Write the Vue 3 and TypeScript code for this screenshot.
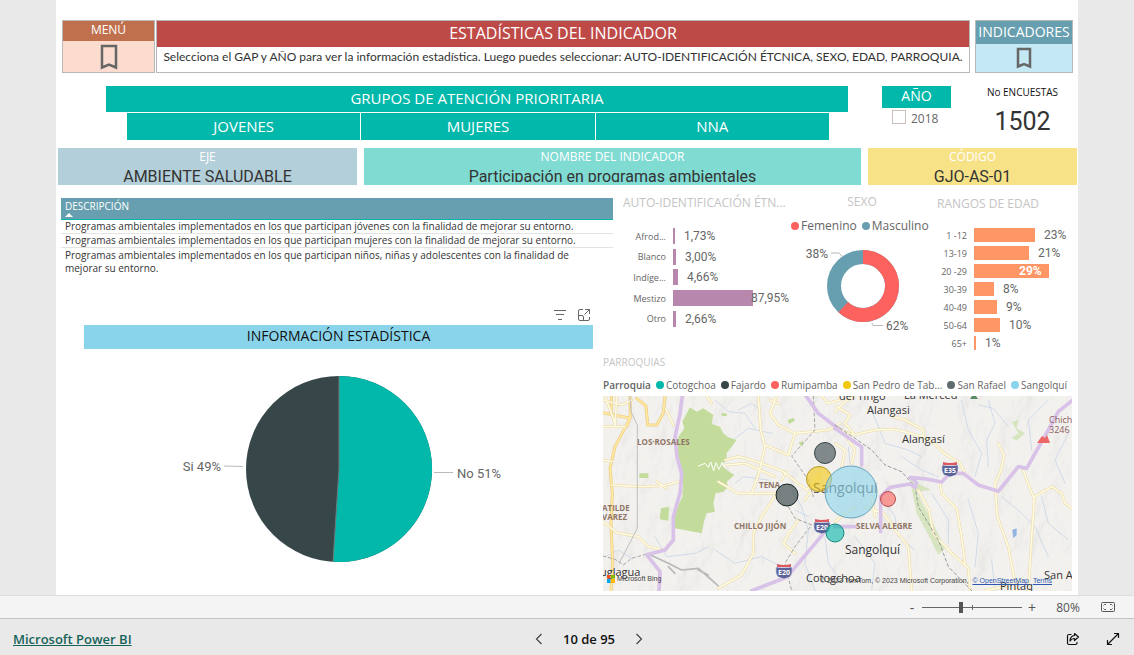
<script setup lang="ts">
import { ref } from 'vue'

interface Bar {
  label: string
  value: string
  size: number
  placement?: 'over' | 'inside'
}

interface Parish {
  name: string
  color: string
}

const groups: string[] = ['JOVENES', 'MUJERES', 'NNA']

const descriptions: string[] = [
  'Programas ambientales implementados en los que participan jóvenes con la finalidad de mejorar su entorno.',
  'Programas ambientales implementados en los que participan mujeres con la finalidad de mejorar su entorno.',
  'Programas ambientales implementados en los que participan niños, niñas y adolescentes con la finalidad de mejorar su entorno.',
]

const ethnicity: Bar[] = [
  { label: 'Afrod...', value: '1,73%', size: 2 },
  { label: 'Blanco', value: '3,00%', size: 3 },
  { label: 'Indíge...', value: '4,66%', size: 5 },
  { label: 'Mestizo', value: '87,95%', size: 80, placement: 'over' },
  { label: 'Otro', value: '2,66%', size: 3 },
]

const ages: Bar[] = [
  { label: '1 -12', value: '23%', size: 61 },
  { label: '13-19', value: '21%', size: 55 },
  { label: '20 -29', value: '29%', size: 75, placement: 'inside' },
  { label: '30-39', value: '8%', size: 20 },
  { label: '40-49', value: '9%', size: 23 },
  { label: '50-64', value: '10%', size: 26 },
  { label: '65+', value: '1%', size: 2 },
]

const parishes: Parish[] = [
  { name: 'Cotogchoa', color: '#01b8aa' },
  { name: 'Fajardo', color: '#374649' },
  { name: 'Rumipamba', color: '#fd625e' },
  { name: 'San Pedro de Tab...', color: '#f2c80f' },
  { name: 'San Rafael', color: '#5f6b6d' },
  { name: 'Sangolquí', color: '#8ad4eb' },
]

const year2018 = ref(false)
const zoom = ref(39)
</script>

<template>
  <div class="viewer">
    <main class="stage">
      <div class="page">
        <header class="top">
          <section class="nav-card menu">
            <h2>MENÚ</h2>
            <button type="button" aria-label="Menú">
              <svg width="18" height="26" viewBox="0 0 18 26"><path d="M2 2H16V23.500L9 20.500L2 23.500Z" fill="none" stroke="#666" stroke-width="2.500" /></svg>
            </button>
          </section>
          <section class="title-card">
            <h1>ESTADÍSTICAS DEL INDICADOR</h1>
            <p>Selecciona el GAP y AÑO para ver la información estadística. Luego puedes seleccionar: AUTO-IDENTIFICACIÓN ÉTCNICA, SEXO, EDAD, PARROQUIA.</p>
          </section>
          <section class="nav-card indicators">
            <h2>INDICADORES</h2>
            <button type="button" aria-label="Indicadores">
              <svg width="16" height="22" viewBox="0 0 16 22"><path d="M2 2H14V19.500L8 17L2 19.500Z" fill="none" stroke="#666" stroke-width="2.500" /></svg>
            </button>
          </section>
        </header>

        <div class="filters">
          <section class="groups">
            <h2>GRUPOS DE ATENCIÓN PRIORITARIA</h2>
            <div class="group-buttons">
              <button v-for="g in groups" :key="g" type="button">{{ g }}</button>
            </div>
          </section>
          <section class="year">
            <h2>AÑO</h2>
            <label><input v-model="year2018" type="checkbox" /><span>2018</span></label>
          </section>
          <section class="surveys">
            <h2>No ENCUESTAS</h2>
            <strong>1502</strong>
          </section>
        </div>

        <div class="facts">
          <section class="fact axis"><h3>EJE</h3><p>AMBIENTE SALUDABLE</p></section>
          <section class="fact name"><h3>NOMBRE DEL INDICADOR</h3><p>Participación en programas ambientales</p></section>
          <section class="fact code"><h3>CÓDIGO</h3><p>GJO-AS-01</p></section>
        </div>

        <div class="body">
          <div class="left">
            <table>
              <thead>
                <tr><th scope="col"><span>DESCRIPCIÓN</span><i class="sort"></i></th></tr>
              </thead>
              <tbody>
                <tr v-for="d in descriptions" :key="d"><td>{{ d }}</td></tr>
              </tbody>
            </table>
            <section class="info">
              <div class="tools">
                <button type="button" aria-label="Filtros">
                  <svg width="14" height="14" viewBox="0 0 14 14"><path d="M1 2.500H13M3 6.500H11M5 11.500H9" fill="none" stroke="#666" /></svg>
                </button>
                <button type="button" aria-label="Modo de enfoque">
                  <svg width="14" height="14" viewBox="0 0 14 14"><path d="M6 1.500H3Q1.500 1.500 1.500 3V11Q1.500 12.500 3 12.500H11Q12.500 12.500 12.500 11V9M8 1.500H12.500V6M12.500 1.500L7.500 6.500M1.500 7.500H5Q6.500 7.500 6.500 9V12.500" fill="none" stroke="#666" /></svg>
                </button>
              </div>
              <h2>INFORMACIÓN ESTADÍSTICA</h2>
              <svg class="pie" viewBox="0 0 509 200" role="img" aria-label="No 51%, Si 49%">
                <circle cx="255" cy="107" r="93" fill="#374649" />
                <path d="M255 14A93 93 0 1 1 249 199.800L255 107Z" fill="#01b8aa" />
                <path d="M255 14V107L249 199.800" fill="none" stroke="#6c7c7c" />
                <path d="M140 104L159 104.500M350 110.500H369" fill="none" stroke="#b9b9b9" />
                <text x="137" y="109" text-anchor="end">Si 49%</text>
                <text x="373" y="116">No 51%</text>
              </svg>
            </section>
          </div>

          <div class="right">
            <div class="charts">
              <section class="chart ethnicity">
                <h3>AUTO-IDENTIFICACIÓN ÉTN...</h3>
                <ul>
                  <li v-for="b in ethnicity" :key="b.label">
                    <span class="cat">{{ b.label }}</span>
                    <span class="bar" :style="{ width: b.size + 'px' }"></span>
                    <span class="val" :class="b.placement">{{ b.value }}</span>
                  </li>
                </ul>
              </section>
              <section class="chart sex">
                <h3>SEXO</h3>
                <div class="legend">
                  <span><i class="dot female"></i>Femenino</span>
                  <span><i class="dot male"></i>Masculino</span>
                </div>
                <svg viewBox="0 0 142 100" width="142" height="100" role="img" aria-label="Femenino 62%, Masculino 38%">
                  <circle cx="72" cy="50" r="29" fill="none" stroke="#689fb0" stroke-width="14" />
                  <path d="M72 21A29 29 0 1 1 52.200 71.200" fill="none" stroke="#fd625e" stroke-width="14" />
                  <path d="M40 17H48L51 20M81 87L82 89.500H92" fill="none" stroke="#b9b9b9" />
                  <text x="37" y="22" text-anchor="end">38%</text>
                  <text x="95" y="94">62%</text>
                </svg>
              </section>
              <section class="chart ages">
                <h3>RANGOS DE EDAD</h3>
                <ul>
                  <li v-for="b in ages" :key="b.label">
                    <span class="cat">{{ b.label }}</span>
                    <span class="bar" :style="{ width: b.size + 'px' }"></span>
                    <span class="val" :class="b.placement">{{ b.value }}</span>
                  </li>
                </ul>
              </section>
            </div>

            <section class="parishes">
              <h3>PARROQUIAS</h3>
              <div class="legend">
                <b>Parroquia</b>
                <span v-for="p in parishes" :key="p.name"><i class="dot" :style="{ background: p.color }"></i>{{ p.name }}</span>
              </div>
              <div class="map">
                <svg viewBox="0 0 469 195" preserveAspectRatio="xMidYMid slice" role="img" aria-label="Mapa de Sangolquí">
                  <defs>
                    <filter id="relief" x="0" y="0" width="100%" height="100%">
                      <feTurbulence type="fractalNoise" baseFrequency="0.035 0.022" numOctaves="4" seed="8" />
                      <feDiffuseLighting lighting-color="#fff" surfaceScale="6" diffuseConstant="1.150"><feDistantLight azimuth="215" elevation="60" /></feDiffuseLighting>
                    </filter>
                    <g id="shield">
                      <path d="M-8-4Q0-3 8-4Q9 3 6 6L0 8L-6 6Q-9 3-8-4Z" fill="#5b6399" stroke="#fff" stroke-width="0.500" />
                      <path d="M-7-7Q0-5 7-7V-4H-7Z" fill="#dd5860" />
                    </g>
                  </defs>
                  <rect width="469" height="195" fill="#f1efec" />
                  <rect width="469" height="195" filter="url(#relief)" opacity="0.150" />
                  <g transform="scale(0.33333)" fill="none" stroke-linecap="round" stroke-linejoin="round">
                    <g transform="translate(-24 -138)">
                      <path d="M285 172L275 190L262 215L268 235L250 260L247 320L258 350L264 400L262 440L240 488V535L320 550L327 515L335 490L360 485L355 460L362 430L385 425L400 410L395 395L418 375L395 360L380 345L395 330L395 310L425 270L400 262L385 250L375 230L350 222L355 195L325 175L305 185ZM198 475L222 470L220 512L194 508ZM578 210L595 203L600 212L582 222ZM133 370H160V384H133ZM380 190H395V198H380ZM610 278L625 272L622 290Z" fill="#c3dc9c" />
                      <g stroke="#cfdbe9" stroke-width="3">
                        <path d="M360 150L400 185L450 190L480 235M420 265L460 235L530 250M430 180L470 160L490 175M590 420L620 470L640 540L630 640L660 722M180 560L215 620L300 610L340 590M690 560L700 640L735 690M360 600L420 640L500 620L560 650M30 620L70 600L110 625M600 480L640 500M420 400L445 380L520 390" />
                      </g>
                      <path d="M160 612L220 640L260 660L310 655L350 690L370 708M220 650L240 670M310 660L340 675" stroke="#b9b9b9" stroke-width="5" />
                      <g stroke="#eccb7f" stroke-width="9">
                        <path d="M24 188L105 205L60 290L45 355L52 430L48 520L53 640L48 722M125 145L153 168L158 225L185 225L205 190L210 138M105 138L106 200L95 230M50 138L48 190" />
                      </g>
                      <g stroke="#ffe9a3" stroke-width="5">
                        <path d="M24 188L105 205L60 290L45 355L52 430L48 520L53 640L48 722M125 145L153 168L158 225L185 225L205 190L210 138M105 138L106 200L95 230M50 138L48 190" />
                      </g>
                      <g stroke="#e8d7a4" stroke-width="8">
                        <path d="M24 150L80 165L110 150M24 230H90M30 138L60 220M65 138L60 230M24 330L50 335M50 405L130 410L190 408L215 405L250 395M185 395L215 415M24 515L65 548L130 560L160 590L205 600M212 175L235 225M335 138L350 160M490 138L497 240L510 290L490 375L470 430L545 430M390 330L430 320L470 330L560 362L635 420L675 370M390 345L450 340L540 380M545 138L525 190L550 225L600 250L580 315L510 285M600 250L700 240L735 220M545 430L500 500L475 550L475 610L440 675L370 715M370 395L430 430L470 430M565 580L600 610M565 580L585 545L610 510M680 138L700 160L735 150M550 160L525 150M630 450L675 380M560 390L575 365" />
                      </g>
                      <g stroke="#fffbe1" stroke-width="5">
                        <path d="M24 150L80 165L110 150M24 230H90M30 138L60 220M65 138L60 230M24 330L50 335M50 405L130 410L190 408L215 405L250 395M185 395L215 415M24 515L65 548L130 560L160 590L205 600M212 175L235 225M335 138L350 160M490 138L497 240L510 290L490 375L470 430L545 430M390 330L430 320L470 330L560 362L635 420L675 370M390 345L450 340L540 380M545 138L525 190L550 225L600 250L580 315L510 285M600 250L700 240L735 220M545 430L500 500L475 550L475 610L440 675L370 715M370 395L430 430L470 430M565 580L600 610M565 580L585 545L610 510M680 138L700 160L735 150M550 160L525 150M630 450L675 380M560 390L575 365" />
                      </g>
                      <path d="M310 348L330 340L340 352L347 336L356 362L363 338L372 358L382 336L390 352" stroke="#fff" stroke-width="3" />
                      <path d="M105 138L108 185L127 225V535L75 635" stroke="#c0c0c0" stroke-width="3" />
                      <path d="M24 618L60 628L85 645L110 625L155 612M655 138L660 240L590 318L640 390L655 440M580 470L600 505L650 525L600 590L570 640L590 722" stroke="#a5a5a5" stroke-width="3" stroke-dasharray="9 8" />
                      <path d="M262 138L255 190L240 262L246 320L260 370L256 425L235 500V570L210 600L155 614L195 665L192 722M633 138L670 190L735 240M470 722L575 682L690 545" stroke="#d8c2e8" stroke-width="11" />
                    </g>
                    <g transform="translate(696 -138)">
                      <path d="M530 215L550 210L545 235L570 250L545 272L530 264L550 250ZM225 390L290 420L245 425L262 460L285 500L330 595L310 615L280 555L245 490Z" fill="#cbdfad" opacity="0.700" />
                      <path d="M532 540L545 535V555L535 565Z" fill="#91b4e2" />
                      <g stroke="#cfdbe9" stroke-width="3">
                        <path d="M110 180L150 280L220 300L260 320M380 150L400 240L440 310L420 380M460 150L480 220L455 270L460 350M640 150L580 210L590 300M140 440L180 500L190 560L240 600M290 430L340 510L340 580M400 450L430 550L420 650M500 440L560 490L600 530L640 620M700 250L660 330L690 400M620 440L640 520L700 570M470 630L480 720M60 560L120 640L110 720M40 290L45 340M200 320L260 360L310 380M430 165L475 175L520 230" />
                      </g>
                      <g stroke="#e8d7a4" stroke-width="8">
                        <path d="M0 185L30 155L60 138M0 235L55 255L120 240L180 238L265 260L300 282L330 312L375 338L390 370M55 250L30 220L45 195L5 170M175 200L210 210L265 240V260M490 280L507 315L497 365L480 400L487 500L520 590L545 722M565 362L598 450L590 560L580 722M598 440L650 410L680 430L690 460L711 475M250 420L282 480L295 550L350 610L400 655L405 722M315 400L320 430L365 475L380 560L390 640M90 470L145 490L180 540L220 590L230 722M0 280L30 300L20 350M40 270L60 300L50 340M450 722L510 710L560 690M0 515L60 470M110 440L120 500" />
                      </g>
                      <g stroke="#fffbe1" stroke-width="5">
                        <path d="M0 185L30 155L60 138M0 235L55 255L120 240L180 238L265 260L300 282L330 312L375 338L390 370M55 250L30 220L45 195L5 170M175 200L210 210L265 240V260M490 280L507 315L497 365L480 400L487 500L520 590L545 722M565 362L598 450L590 560L580 722M598 440L650 410L680 430L690 460L711 475M250 420L282 480L295 550L350 610L400 655L405 722M315 400L320 430L365 475L380 560L390 640M90 470L145 490L180 540L220 590L230 722M0 280L30 300L20 350M40 270L60 300L50 340M450 722L510 710L560 690M0 515L60 470M110 440L120 500" />
                      </g>
                      <path d="M0 225L60 265L110 300L150 345L200 365L240 410L250 470L310 570L340 650L410 722" stroke="#999" stroke-width="3" stroke-dasharray="9 8" />
                      <path d="M0 235L50 270L80 290V345M137 545V440L165 412L225 402L240 412L245 398L225 382L275 387L320 396L345 370H385L430 405L490 424L550 350L575 355L640 240L670 185L711 152M0 530H60" stroke="#d8c2e8" stroke-width="11" />
                    </g>
                  </g>
                  <use href="#shield" x="347" y="73" />
                  <use href="#shield" x="219" y="130" />
                  <use href="#shield" x="181" y="175" />
                  <g class="shield-text"><text x="347" y="77">E35</text><text x="219" y="134">E20</text><text x="181" y="179">E20</text></g>
                  <path d="M434 47L439 40L442 42L444 39L447 47Z" fill="#ee6767" />
                  <path d="M367 3L371 -3L375 3Z" fill="#5c8a64" />
                  <g class="district">
                    <text x="34" y="49">LOS·ROSALES</text>
                    <text x="156" y="92">TENA</text>
                    <text x="-1" y="115">ATILDE</text><text x="-1" y="124">VAREZ</text>
                    <text x="131" y="133">CHILLO JIJÓN</text>
                    <text x="253" y="133">SELVA ALEGRE</text>
                  </g>
                  <g class="town">
                    <text x="236" y="4">del Tingo</text><text x="301" y="3">La Merced</text>
                    <text x="264" y="18">Alangasi</text><text x="299" y="47">Alangasí</text>
                    <text x="-3" y="180">uglagua</text><text x="203" y="186">Cotogchoa</text>
                    <text x="397" y="194">Pintaq</text><text x="441" y="183">San A</text>
                  </g>
                  <text class="city" x="210" y="97">Sangolqui</text>
                  <text class="city small" x="242" y="158">Sangolquí</text>
                  <g class="peak"><text x="446" y="27">Chich</text><text x="446" y="37">3246</text></g>
                  <g fill-opacity="0.600">
                    <circle cx="222" cy="57" r="10.500" fill="#374649" stroke="#374649" />
                    <circle cx="184" cy="99" r="11" fill="#273639" stroke="#182426" />
                    <circle cx="216" cy="83" r="12.500" fill="#f2c80f" stroke="#b99d24" />
                    <circle cx="248" cy="96" r="26" fill="#8ad4eb" stroke="#69a5bb" />
                    <circle cx="285" cy="103" r="7.500" fill="#fd625e" stroke="#b94e4e" />
                    <circle cx="232" cy="137" r="9" fill="#01b8aa" stroke="#18887f" />
                  </g>
                </svg>
                <div class="brand"><svg width="8" height="8" viewBox="0 0 8 8"><path d="M0 0H3.500V3.500H0Z" fill="#f25022" /><path d="M4 0H8V3.500H4Z" fill="#7fba00" /><path d="M0 4H3.500V8H0Z" fill="#00a4ef" /><path d="M4 4H8V8H4Z" fill="#ffb900" /></svg>Microsoft Bing</div>
                <div class="credits">© 2023 TomTom, © 2023 Microsoft Corporation, <a href="#osm">© OpenStreetMap</a> <a href="#terms">Terms</a></div>
              </div>
            </section>
          </div>
        </div>
      </div>
    </main>

    <div class="zoombar">
      <button type="button" aria-label="Alejar">-</button>
      <input v-model="zoom" type="range" min="0" max="100" aria-label="Zoom" />
      <button type="button" aria-label="Acercar">+</button>
      <span class="percent">80%</span>
      <button type="button" class="fit" aria-label="Ajustar a la página">
        <svg width="14" height="10" viewBox="0 0 14 10"><rect x="0.500" y="0.500" width="13" height="9" rx="1" fill="none" stroke="#555" /><path d="M5 2.500H3.500L2.500 3.500M2.500 6.500L3.500 7.500H5M9 2.500H10.500L11.500 3.500M11.500 6.500L10.500 7.500H9" fill="none" stroke="#555" /></svg>
      </button>
    </div>

    <footer>
      <a href="#powerbi">Microsoft Power BI</a>
      <nav aria-label="Páginas">
        <button type="button" aria-label="Página anterior"><svg width="8" height="12" viewBox="0 0 8 12"><path d="M6.500 1L1.500 6L6.500 11" fill="none" stroke="#444" stroke-width="1.200" /></svg></button>
        <span>10 de 95</span>
        <button type="button" aria-label="Página siguiente"><svg width="8" height="12" viewBox="0 0 8 12"><path d="M1.500 1L6.500 6L1.500 11" fill="none" stroke="#444" stroke-width="1.200" /></svg></button>
      </nav>
      <div class="actions">
        <button type="button" aria-label="Compartir">
          <svg width="14" height="14" viewBox="0 0 14 14"><path d="M5.500 2.500H3Q1.500 2.500 1.500 4V11Q1.500 12.500 3 12.500H9.500Q11 12.500 11 11V10M8.500 1.500L12.500 5L8.500 8.500V6.500Q6 6.300 4 9Q4.200 4 8.500 3.500Z" fill="none" stroke="#111" stroke-width="1.200" stroke-linejoin="round" /></svg>
        </button>
        <button type="button" aria-label="Pantalla completa">
          <svg width="14" height="14" viewBox="0 0 14 14"><path d="M1.500 12.500L12.500 1.500M8 1.500H12.500V6M1.500 8V12.500H6" fill="none" stroke="#111" stroke-width="1.200" /></svg>
        </button>
      </div>
    </footer>
  </div>
</template>

<style>
body {
  background: #e9e9e9;
}
</style>

<style scoped>
* {
  box-sizing: border-box;
}
.viewer {
  display: flex;
  flex-direction: column;
  min-height: 100vh;
  font-family: "Open Sans", "Noto Sans", sans-serif;
  color: #333;
}
h1, h2, h3, p, ul {
  margin: 0;
  padding: 0;
  font-weight: 400;
}
ul {
  list-style: none;
}
button {
  display: flex;
  align-items: center;
  justify-content: center;
  margin: 0;
  padding: 0;
  border: 0;
  background: none;
  color: inherit;
  font: inherit;
}
svg {
  display: block;
}
.stage {
  flex: 1;
  padding: 0 56px;
}
.page {
  height: 100%;
  padding: 20px 0 4px;
  background: #fff;
}
.top {
  display: grid;
  grid-template-columns: 93px 1fr 98px;
  gap: 1px;
  padding: 0 5px 0 6px;
}
.nav-card {
  display: flex;
  flex-direction: column;
  height: 53px;
  border: 1px solid #b8b8b8;
  text-align: center;
  color: #fff;
}
.nav-card button {
  flex: 1;
}
.menu {
  background: #fddcd0;
}
.menu h2 {
  height: 20px;
  background: #c0704d;
  font-size: 12px;
  line-height: 18px;
}
.indicators {
  background: #c5e8f5;
}
.indicators h2 {
  height: 23px;
  background: #689fb0;
  font-size: 14px;
  line-height: 21px;
  white-space: nowrap;
}
.title-card {
  margin-right: 4px;
  border: 1px solid #b8b8b8;
  text-align: center;
  white-space: nowrap;
}
.title-card h1 {
  height: 26px;
  background: #be4a47;
  color: #fff;
  font-size: 16px;
  line-height: 24px;
}
.title-card p {
  font-family: Lato, sans-serif;
  font-size: 12px;
  line-height: 20px;
}
.filters {
  display: grid;
  grid-template-columns: 1fr 69px 114px;
  padding: 13px 13px 0 50px;
  text-align: center;
}
.groups {
  margin-right: 34px;
}
.groups h2 {
  height: 26px;
  background: #01b8aa;
  color: #fff;
  font-size: 15px;
  line-height: 24px;
}
.group-buttons {
  display: grid;
  grid-template-columns: repeat(3, 1fr);
  gap: 1px;
  padding: 1px 19px 0 21px;
}
.group-buttons button {
  height: 27px;
  padding-bottom: 2px;
  background: #01b8aa;
  color: #fff;
  font-size: 15px;
}
.year h2 {
  height: 22px;
  background: #01b8aa;
  color: #fff;
  font-size: 14px;
  line-height: 20px;
}
.year label {
  display: flex;
  gap: 5px;
  padding: 2px 0 0 10px;
  font-size: 12px;
  line-height: 18px;
  color: #666;
}
.year input {
  appearance: none;
  width: 14px;
  height: 14px;
  margin: 0;
  border: 1px solid #c9bfbd;
}
.surveys {
  padding-left: 29px;
  color: #111;
}
.surveys h2 {
  font-size: 10px;
  line-height: 12px;
  white-space: nowrap;
}
.surveys strong {
  display: block;
  margin-top: 7px;
  font: 400 25px/34px Roboto, sans-serif;
  color: #333;
}
.facts {
  display: grid;
  grid-template-columns: 299fr 497fr 209fr;
  column-gap: 7px;
  padding: 8px 1px 0 2px;
  text-align: center;
}
.fact {
  height: 37px;
}
.fact h3 {
  color: #fff;
  font-size: 12px;
  line-height: 18px;
}
.fact p {
  padding-top: 1px;
  font: 400 16px/19px Roboto, sans-serif;
}
.axis {
  background: #b3cfd9;
}
.name {
  background: #80dbd3;
}
.name p {
  height: 16px;
  overflow: hidden;
}
.code {
  background: #f8e287;
}
.body {
  display: grid;
  grid-template-columns: 547fr 475fr;
}
.left {
  display: flex;
  flex-direction: column;
  justify-content: space-between;
  padding: 13px 10px 0 5px;
}
table {
  width: calc(100% + 20px);
  border-collapse: collapse;
  font-size: 10px;
}
th {
  height: 21px;
  padding: 0 4px;
  background: #689fb0;
  border-bottom: 1px solid #01b8aa;
  color: #fff;
  font-weight: 400;
  line-height: 14px;
  text-align: left;
}
th span {
  display: block;
}
.sort {
  display: block;
  width: 8px;
  border: 4px solid transparent;
  border-top: 0;
  border-bottom: 4px solid #fff;
}
td {
  padding: 0 20px 0 4px;
  border-bottom: 1px solid #e3e3e3;
  line-height: 13px;
}
tr:last-child td {
  padding-top: 1px;
  border: 0;
}
.info {
  padding-left: 23px;
}
.tools {
  display: flex;
  justify-content: flex-end;
  gap: 10px;
  padding: 0 2px 3px;
}
.info h2 {
  height: 24px;
  background: #8ad4eb;
  color: #111;
  font-size: 14px;
  line-height: 22px;
  text-align: center;
}
.pie {
  width: 100%;
  margin: 13px 0 29px;
  overflow: visible;
}
svg text {
  font: 13px Roboto, sans-serif;
  fill: #666;
}
.charts {
  display: grid;
  grid-template-columns: 188fr 142fr 145fr;
}
.chart h3, .parishes h3 {
  color: #c4c4c4;
  white-space: nowrap;
}
.chart h3 {
  font-size: 12px;
  line-height: 18px;
}
.chart ul {
  font: 12px Roboto, sans-serif;
  color: #666;
}
.chart li {
  display: flex;
  align-items: center;
}
.cat {
  font: 9px "Open Sans", sans-serif;
  text-align: right;
}
.val {
  margin-left: 9px;
}
.ethnicity {
  padding: 9px 0 0 20px;
}
.ethnicity ul {
  display: grid;
  grid-template-rows: repeat(5, 1fr);
  height: 103px;
  margin-top: 14px;
}
.ethnicity .cat {
  width: 43px;
  margin-right: 7px;
}
.ethnicity .bar {
  height: 16px;
  background: #b887ad;
}
.ethnicity .over {
  margin-left: -2px;
}
.sex {
  padding-top: 8px;
}
.sex h3 {
  text-align: center;
}
.legend {
  display: flex;
  white-space: nowrap;
  color: #666;
}
.legend span {
  display: flex;
  align-items: center;
}
.dot {
  width: 8px;
  height: 8px;
  margin-right: 2px;
  border-radius: 50%;
}
.female {
  background: #fd625e;
}
.male {
  background: #689fb0;
}
.sex .legend {
  gap: 5px;
  margin-top: 6px;
  font-size: 12px;
  line-height: 18px;
}
.sex svg {
  margin-top: 1px;
}
.sex svg text {
  font-size: 12px;
}
.ages {
  padding: 10px 0 0 4px;
}
.ages ul {
  display: grid;
  gap: 4px;
  margin-top: 15px;
}
.ages li {
  height: 14px;
}
.ages .cat {
  width: 30px;
  margin-right: 7px;
}
.ages .bar {
  height: 14px;
  background: #fe9666;
}
.ages .inside {
  margin-left: -30px;
  color: #fff;
  font-weight: 700;
}
.parishes {
  padding: 3px 6px 0 0;
}
.parishes h3 {
  font-size: 10px;
  line-height: 18px;
}
.parishes .legend {
  justify-content: space-between;
  margin: 5px 5px 2px 0;
  font-size: 10px;
  line-height: 18px;
}
.parishes b {
  font-weight: 600;
}
.map {
  position: relative;
  overflow: hidden;
}
.map > svg {
  width: 100%;
  height: 195px;
}
.map text {
  font-family: "Open Sans", sans-serif;
}
.map .district text {
  font-size: 8px;
  font-weight: 700;
  fill: #8f7566;
}
.map .town text {
  font-size: 11px;
  fill: #333;
}
.map .city {
  font-size: 14px;
  fill: #555;
}
.map .small {
  font-size: 12px;
  fill: #333;
}
.map .peak text {
  font-size: 9px;
  fill: #8c5c60;
}
.map .shield-text text {
  font-size: 7px;
  font-weight: 700;
  fill: #fff;
  text-anchor: middle;
}
.brand, .credits {
  position: absolute;
  font: 7px/10px "Liberation Sans", sans-serif;
  white-space: nowrap;
  color: #444;
}
.brand {
  display: flex;
  align-items: center;
  gap: 2px;
  left: 4px;
  bottom: 7px;
}
.credits {
  right: 20px;
  bottom: 5px;
}
.credits a {
  margin-left: 2px;
  color: #2d57b0;
}
.zoombar {
  display: flex;
  align-items: center;
  justify-content: flex-end;
  height: 24px;
  padding-right: 19px;
  border-top: 1px solid #ddd;
  border-bottom: 1px solid #c3c3c3;
  background: #f4f4f4;
  color: #555;
  font-size: 12px;
}
.zoombar button {
  width: 14px;
  font-size: 14px;
}
.zoombar input {
  appearance: none;
  width: 100px;
  height: 12px;
  margin: 0 3px;
  background:
    linear-gradient(#666, #666) 50px 50% / 1px 5px no-repeat,
    linear-gradient(#666, #666) 0 50% / 100% 1px no-repeat;
}
.zoombar input::-webkit-slider-thumb {
  appearance: none;
  width: 4px;
  height: 11px;
  background: #555;
}
.percent {
  width: 32px;
  margin: 0 17px 0 13px;
  text-align: center;
}
footer {
  display: grid;
  grid-template-columns: 522fr auto 477fr;
  align-items: center;
  height: 36px;
  padding: 3px 14px 0 13px;
  background: #e9e9e9;
}
footer a {
  font-size: 13px;
  font-weight: 600;
  color: #17645a;
}
footer nav {
  display: flex;
  align-items: center;
  gap: 20px;
  font-size: 13px;
  font-weight: 600;
  color: #111;
}
.actions {
  display: flex;
  justify-content: flex-end;
  gap: 26px;
}
</style>
